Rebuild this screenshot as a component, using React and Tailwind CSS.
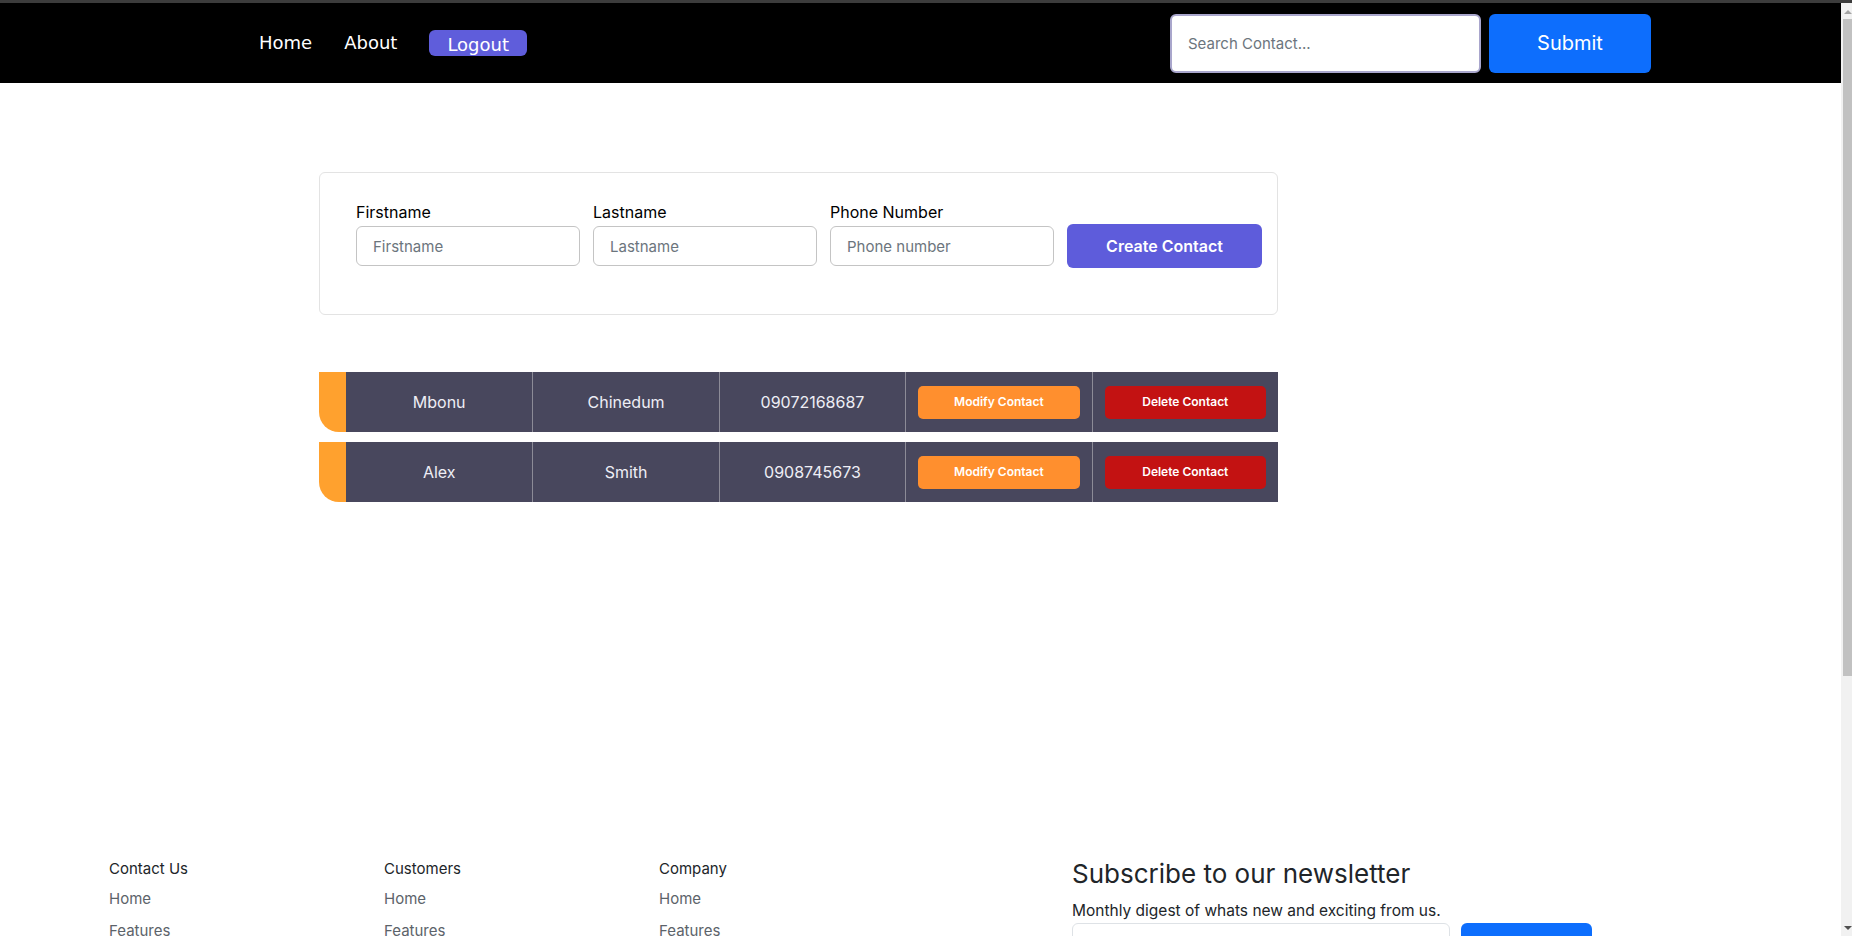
import React from 'react';

const font = { fontFamily: 'Inter, "Open Sans", sans-serif' };

const contacts = [
  { id: 1, first: 'Mbonu', last: 'Chinedum', phone: '09072168687' },
  { id: 2, first: 'Alex', last: 'Smith', phone: '0908745673' },
];

const footerCols = [
  { title: 'Contact Us', links: ['Home', 'Features', 'Pricing', 'FAQs', 'About'] },
  { title: 'Customers', links: ['Home', 'Features', 'Pricing', 'FAQs', 'About'] },
  { title: 'Company', links: ['Home', 'Features', 'Pricing', 'FAQs', 'About'] },
];

function Navbar() {
  return (
    <nav className="h-[80px] bg-black flex items-center justify-between pl-[259px] pr-[190px]">
      <div className="flex items-center gap-8 font-['DejaVu_Sans',sans-serif] text-[18px] text-white">
        <a href="#" className="leading-none">Home</a>
        <a href="#" className="leading-none">About</a>
        <button className="h-[26px] px-[18px] rounded-[6px] bg-[#5f5ddb] text-white text-[18px] leading-none pt-[3px]">
          Logout
        </button>
      </div>
      <form className="flex items-center gap-2" onSubmit={(e) => e.preventDefault()}>
        <input
          type="text"
          placeholder="Search Contact..."
          className="w-[311px] h-[59px] rounded-[6px] border-2 border-[#a9a6cc] bg-white px-4 text-[15px] text-gray-800 placeholder:text-[#6c757d] outline-none"
        />
        <button className="w-[162px] h-[59px] rounded-[6px] bg-[#0d6efd] text-white text-[20px]">
          Submit
        </button>
      </form>
    </nav>
  );
}

function Field({ label, placeholder }) {
  return (
    <div className="flex flex-col w-[224px]">
      <label className="text-[16px] leading-[22px] text-black mb-[3px]">{label}</label>
      <input
        type="text"
        placeholder={placeholder}
        className="h-[40px] rounded-[6px] border border-[#c4c4c4] px-4 text-[15px] placeholder:text-[#6c757d] outline-none"
      />
    </div>
  );
}

function ContactForm() {
  return (
    <div className="w-[959px] h-[143px] rounded-[6px] border border-[#e3e3e3] pl-[36px] pr-[13px] pt-[28px]">
      <div className="flex items-end gap-[13px]">
        <Field label="Firstname" placeholder="Firstname" />
        <Field label="Lastname" placeholder="Lastname" />
        <Field label="Phone Number" placeholder="Phone number" />
        <button className="w-[195px] h-[44px] mb-[-2px] rounded-[6px] bg-[#5e5cdb] text-white text-[16px] font-semibold">
          Create Contact
        </button>
      </div>
    </div>
  );
}

function ContactRow({ c }) {
  return (
    <div className="flex h-[60px] w-[959px]">
      <div className="w-[27px] bg-[#ffa12e] rounded-bl-[20px]"></div>
      <div className="flex-1 grid grid-cols-5 bg-[#48475d] text-[#eeeef5] text-[16px]">
        <div className="flex items-center justify-center">{c.first}</div>
        <div className="flex items-center justify-center border-l border-[#8c8b97]">{c.last}</div>
        <div className="flex items-center justify-center border-l border-[#8c8b97]">{c.phone}</div>
        <div className="flex items-center justify-center border-l border-[#8c8b97] px-3">
          <button className="w-full h-[33px] rounded-[5px] bg-[#ff8f2e] text-white text-[12px] font-semibold">
            Modify Contact
          </button>
        </div>
        <div className="flex items-center justify-center border-l border-[#8c8b97] px-3">
          <button className="w-full h-[33px] rounded-[5px] bg-[#c31212] text-white text-[12px] font-semibold">
            Delete Contact
          </button>
        </div>
      </div>
    </div>
  );
}

function Footer() {
  return (
    <footer className="mt-[307px] pt-12 pb-16 pl-[109px]">
      <div className="flex">
        {footerCols.map((col) => (
          <div key={col.title} className="w-[275px]">
            <h5 className="text-[15px] leading-[24px] text-[#212529] mb-[6px]">{col.title}</h5>
            <ul className="flex flex-col gap-[8px]">
              {col.links.map((l) => (
                <li key={l} className="text-[15px] leading-[24px] text-[#5c636a]">
                  <a href="#">{l}</a>
                </li>
              ))}
            </ul>
          </div>
        ))}
        <div className="ml-[138px] w-[540px]">
          <h5 className="text-[26px] leading-[32px] text-[#212529] mt-[1px]">Subscribe to our newsletter</h5>
          <p className="text-[15.5px] leading-[22px] text-[#212529] mt-[10px]">
            Monthly digest of whats new and exciting from us.
          </p>
          <div className="flex gap-[11px] mt-[1px]">
            <input
              type="text"
              placeholder="Email address"
              className="w-[378px] h-[40px] rounded-[6px] border border-[#dee2e6] px-3 text-[15px] outline-none"
            />
            <button className="w-[131px] h-[40px] rounded-[6px] bg-[#0d6efd] text-white text-[15px]">Subscribe</button>
          </div>
        </div>
      </div>
      <div className="mt-16 mr-[250px] border-t border-[#dee2e6] pt-6 flex justify-between text-[15px] text-[#212529]">
        <p>© 2023 Company, Inc. All rights reserved.</p>
      </div>
    </footer>
  );
}

// drawn stand-in for the browser's scrollbar
function Scrollbar() {
  return (
    <div className="w-[11px] shrink-0 bg-[#f1f1f1] flex flex-col">
      <div className="h-[16px] flex justify-end">
        <div className="mt-[7px] w-0 h-0 border-l-[4px] border-r-[4px] border-b-[4px] border-l-transparent border-r-transparent border-b-[#a3a3a3]"></div>
      </div>
      <div className="ml-[2px] h-[657px] bg-[#c1c1c1]"></div>
      <div className="flex-1"></div>
      <div className="h-[10px] flex justify-end">
        <div className="w-0 h-0 border-l-[4px] border-r-[4px] border-t-[4px] border-l-transparent border-r-transparent border-t-[#505050]"></div>
      </div>
    </div>
  );
}

export default function App() {
  return (
    <div style={font} className="w-[1852px] h-[936px] flex flex-col bg-white overflow-hidden">
      <div className="h-[3px] bg-[#3c3c3c] shrink-0"></div>
      <div className="flex-1 flex min-h-0">
        <div className="flex-1 overflow-hidden">
          <Navbar />
          <main className="pl-[319px] pt-[89px]">
            <ContactForm />
            <div className="mt-[57px] flex flex-col gap-[10px]">
              {contacts.map((c) => (
                <ContactRow key={c.id} c={c} />
              ))}
            </div>
          </main>
          <Footer />
        </div>
        <Scrollbar />
      </div>
    </div>
  );
}
